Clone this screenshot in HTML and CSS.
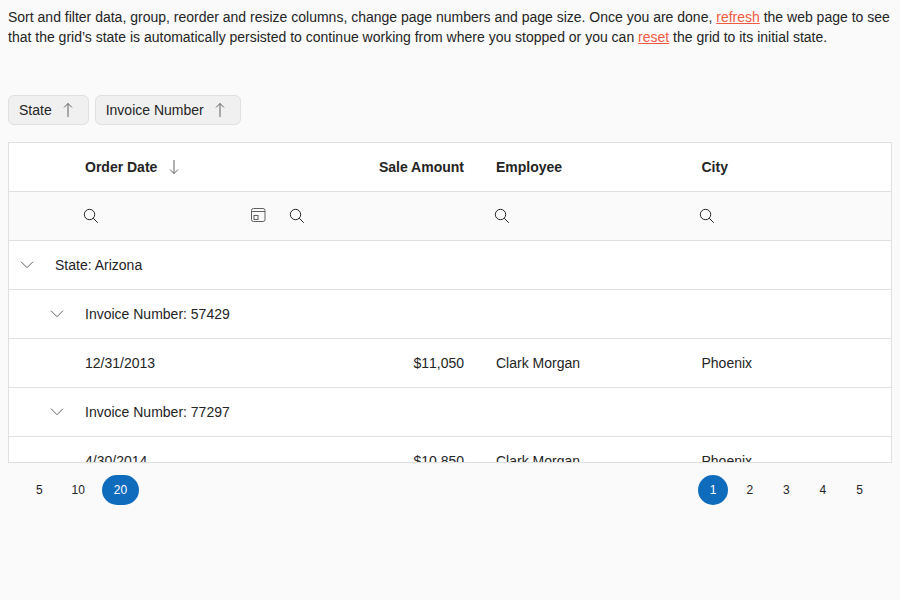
FILE: index.html
```html
<!DOCTYPE html>
<html lang="en">
<head>
<meta charset="utf-8">
<title>Grid state</title>
<link rel="stylesheet" href="styles.css">
</head>
<body>
<svg class="defs" aria-hidden="true">
<symbol id="up" viewBox="0 0 18 18"><path d="M9 16V2.500M5 6.500l4-4 4 4"/></symbol>
<symbol id="down" viewBox="0 0 18 18"><path d="M9 2v13.500M5 11.500l4 4 4-4"/></symbol>
<symbol id="search" viewBox="0 0 18 18"><circle cx="7.500" cy="7.500" r="5.200"/><path d="M11.200 11.200l4.600 4.600"/></symbol>
<symbol id="chevron" viewBox="0 0 18 18"><path d="M3 5.700l6 6 6-6"/></symbol>
<symbol id="calendar" viewBox="0 0 18 18"><rect x="2.500" y="1.500" width="13.500" height="13" rx="2"/><path d="M2.500 4.500h13.500"/><rect x="5" y="8.500" width="4" height="4"/></symbol>
</svg>
<p class="intro">Sort and filter data, group, reorder and resize columns, change page numbers and page size. Once you are done, <a href="#">refresh</a> the web page to see that the grid’s state is automatically persisted to continue working from where you stopped or you can <a href="#">reset</a> the grid to its initial state.</p>
<div class="groups">
<span class="chip">State<svg class="icon"><use href="#up"/></svg></span>
<span class="chip">Invoice Number<svg class="icon"><use href="#up"/></svg></span>
</div>
<main class="grid">
<div class="row head"><span class="date">Order Date<svg class="icon"><use href="#down"/></svg></span><span class="amount">Sale Amount</span><span>Employee</span><span>City</span></div>
<div class="row filter"><span class="date"><svg class="icon"><use href="#search"/></svg><svg class="icon calendar"><use href="#calendar"/></svg></span><span><svg class="icon"><use href="#search"/></svg></span><span><svg class="icon"><use href="#search"/></svg></span><span><svg class="icon"><use href="#search"/></svg></span></div>
<div class="group"><svg class="icon"><use href="#chevron"/></svg>State: Arizona</div>
<div class="group nested"><svg class="icon"><use href="#chevron"/></svg>Invoice Number: 57429</div>
<div class="row"><span>12/31/2013</span><span class="amount">$11,050</span><span>Clark Morgan</span><span>Phoenix</span></div>
<div class="group nested"><svg class="icon"><use href="#chevron"/></svg>Invoice Number: 77297</div>
<div class="row"><span>4/30/2014</span><span class="amount">$10,850</span><span>Clark Morgan</span><span>Phoenix</span></div>
</main>
<footer class="pager">
<div class="sizes"><span>5</span><span>10</span><span class="active">20</span></div>
<div class="pages"><span class="active">1</span><span>2</span><span>3</span><span>4</span><span>5</span></div>
</footer>
</body>
</html>
```
FILE: styles.css
```css
* { box-sizing: border-box; }
body { margin: 0; padding: 7px 8px; background: #fafafa; color: #242424; font: 14px/20px "Liberation Sans", Arial, sans-serif; }
.defs { position: absolute; width: 0; height: 0; }
.intro { margin: 0; }
a { color: #f05b41; }
.icon { width: 18px; height: 18px; flex: none; fill: none; stroke: #616161; stroke-width: 1; }
.groups { display: flex; gap: 6px; margin-top: 48px; }
.chip { display: flex; align-items: center; gap: 7.4px; height: 30px; padding: 0 10.6px 0 10px; border: 1px solid #e0e0e0; border-radius: 6px; background: #f0f0f0; }
.grid { height: 321px; margin-top: 17px; border: 1px solid #e0e0e0; background: #fff; overflow: hidden; }
.row, .group { height: 49px; border-bottom: 1px solid #e0e0e0; }
.row { display: grid; grid-template-columns: 206px 205px 205.5px 1fr; padding-left: 60px; }
.row > span { display: flex; align-items: center; padding: 0 16px; }
.row .amount { justify-content: flex-end; font-kerning: none; }
.head { font-weight: bold; }
.head .amount { font-kerning: auto; }
.head .date { gap: 7.5px; }
.filter { background: #fafafa; }
.filter > span { padding: 0 12.6px; }
.filter .icon { stroke: #242424; }
.filter .calendar { margin-left: auto; margin-right: -5px; stroke: #616161; }
.group { display: flex; align-items: center; gap: 19px; padding-left: 9px; }
.nested { padding-left: 39px; }
.pager { display: flex; justify-content: space-between; margin-top: 12px; padding: 0 17.5px 0 16.4px; font-size: 12px; line-height: 30px; }
.sizes, .pages { display: flex; gap: 6.6px; }
.pager span { min-width: 30px; height: 30px; border-radius: 15px; text-align: center; }
.pager .active { background: #0f6cbd; color: #fff; }
.sizes { gap: 5.3px; }
.sizes span + span { width: 37px; }
```
